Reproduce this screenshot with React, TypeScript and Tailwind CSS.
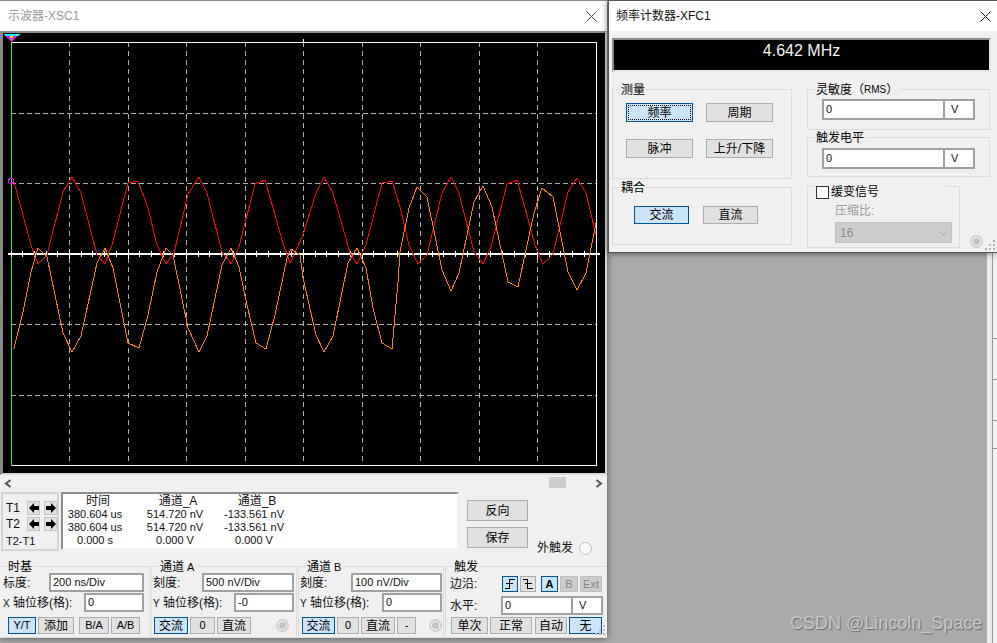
import type { ReactNode } from 'react';

const red = '14,182 23,215 31,245 38,264 47,255 63,192 72,177 81,193 97,255 105,264 112,245 128,183 138,181 148,208 157,245 166,264 174,253 188,194 199,177 207,193 222,252 231,264 239,247 255,184 265,180 275,215 283,243 290,263 303,235 316,193 324,177 333,193 350,253 357,264 366,245 382,183 392,181 400,207 409,245 418,264 427,255 442,193 451,177 459,193 474,252 483,264 491,247 507,184 517,180 527,215 535,245 543,264 553,254 568,192 577,178 586,193 596,235';
const orange = '13,349 14,348 23,312 31,272 38,248 47,257 55,295 63,333 72,352 81,336 97,263 105,248 113,268 128,343 139,348 148,315 157,272 166,248 173,255 188,328 199,352 207,336 222,265 231,248 239,267 247,305 256,343 266,349 275,315 287,258 291,249 300,255 303,278 316,335 324,352 333,336 348,263 357,248 366,268 373,308 382,343 392,349 398,282 400,252 409,208 417,187 427,197 442,270 451,291 459,273 474,202 483,186 492,207 508,282 518,287 534,213 542,188 553,197 568,272 577,290 586,273 596,223';

const minorTicks = Array.from({ length: 50 }, (_, i) => 11 + i * 11.7);
const majorX = [69.5, 128, 186.5, 245, 303, 362, 420, 479, 537];
const gridY = [113, 183, 324, 395];

function ScopeScreen() {
  return (
    <svg width="602" height="440" viewBox="3 33 602 440" shapeRendering="crispEdges" className="block">
      {majorX.map((x) => (
        <line key={x} x1={x} x2={x} y1="42" y2="466" stroke="#b0b0b0" strokeDasharray="5 4" />
      ))}
      {gridY.map((y) => (
        <line key={y} x1="11" x2="596" y1={y} y2={y} stroke="#b0b0b0" strokeDasharray="5 3" />
      ))}
      <path d="M11.5 42.5H596.5V465.5H11.5" fill="none" stroke="#fff" />
      <line x1="303.5" x2="303.5" y1="39" y2="42" stroke="#fff" />
      <line x1="11.5" x2="11.5" y1="40" y2="466" stroke="#3fe03f" />
      <line x1="8" x2="600" y1="254" y2="254" stroke="#fff" strokeWidth="2" />
      {minorTicks.map((x) => (
        <line key={x} x1={x} x2={x} y1="251" y2="257" stroke="#fff" />
      ))}
      {majorX.map((x) => (
        <line key={x} x1={x} x2={x} y1="249" y2="259" stroke="#fff" />
      ))}
      <polyline points={red} fill="none" stroke="#ff0000" />
      <polyline points={orange} fill="none" stroke="#ff8000" />
      <circle cx="11" cy="181" r="2.5" fill="none" stroke="#ff00ff" />
      <polygon points="3,34 20,34 18,36 5,36" fill="#00ffff" />
      <polygon points="5,36 18,36 11.5,42" fill="#ff00ff" />
      <rect x="10" y="36" width="3" height="2" fill="#ffff00" />
      <rect x="10" y="39" width="3" height="1" fill="#3fe03f" />
    </svg>
  );
}

function Btn({ className, active, focus, disabled, latin, children }: { className: string; active?: boolean; focus?: boolean; disabled?: boolean; latin?: boolean; children: ReactNode }) {
  const look = active
    ? 'bg-[#cce4f7] border-[#005499] text-black'
    : disabled
      ? 'bg-[#cccccc] border-[#bfbfbf] text-[#838383]'
      : 'bg-[#e1e1e1] border-[#adadad] text-black';
  return (
    <div className={`relative flex items-center justify-center shrink-0 border leading-none ${latin ? 'text-[11px]' : 'text-[12px]'} ${look} ${className}`}>
      {focus && <div className="absolute inset-[1px] border border-dotted border-black" />}
      {children}
    </div>
  );
}

function Field({ className, children }: { className: string; children: ReactNode }) {
  return (
    <div className={`flex items-center shrink-0 bg-white border-2 border-[#a0a0a0] text-[11px] leading-none text-[#111] ${className}`}>
      {children}
    </div>
  );
}

function Group({ title, className, titleClass, children }: { title: ReactNode; className: string; titleClass?: string; children: ReactNode }) {
  return (
    <div className={`relative border border-[#dcdcdc] ${className}`}>
      <div className={`absolute left-[7px] flex items-center bg-[#f0f0f0] px-[1px] text-[12px] leading-[14px] text-black ${titleClass ?? '-top-[7px]'}`}>{title}</div>
      {children}
    </div>
  );
}

function Radio({ className }: { className: string }) {
  return (
    <div className={`flex items-center justify-center shrink-0 size-[13px] rounded-full border-2 border-[#d0d0d0] bg-[#f8f8f8] ${className}`}>
      <div className="size-[7px] rounded-full bg-[#c4c4c4]" />
    </div>
  );
}

function Grip() {
  return (
    <svg width="11" height="11" viewBox="0 0 11 11" className="absolute right-[1px] bottom-[1px]">
      <g fill="#b5b5b5">
        <rect x="8" y="0" width="2" height="2" />
        <rect x="4" y="4" width="2" height="2" />
        <rect x="8" y="4" width="2" height="2" />
        <rect x="0" y="8" width="2" height="2" />
        <rect x="4" y="8" width="2" height="2" />
        <rect x="8" y="8" width="2" height="2" />
      </g>
    </svg>
  );
}

function Arrow({ left }: { left?: boolean }) {
  return (
    <Btn className="w-[13px] h-[14px] border-[#c4c4c4]">
      <svg width="10" height="10" viewBox="0 0 10 10">
        <path d={left ? 'M0 5 5 0V3H10V7H5V10Z' : 'M10 5 5 0V3H0V7H5V10Z'} fill="#000" />
      </svg>
    </Btn>
  );
}

function Chevron({ left }: { left?: boolean }) {
  return (
    <svg width="8" height="9" viewBox="0 0 8 9">
      <path d={left ? 'M6.5 1 2 4.5 6.5 8' : 'M1.5 1 6 4.5 1.5 8'} fill="none" stroke="#555" strokeWidth="2" />
    </svg>
  );
}

function CursorReadout() {
  const rows = [
    ['380.604 us', '514.720 nV', '-133.561 nV'],
    ['380.604 us', '514.720 nV', '-133.561 nV'],
    ['0.000 s', '0.000 V', '0.000 V'],
  ];
  return (
    <div className="w-[398px] h-[58px] bg-white border-2 border-[#8c8c8c] border-r-[#f0f0f0] border-b-[#f0f0f0] pl-[1px] pt-[1px]">
      <div className="grid grid-cols-[62px_98px_60px] w-[220px] text-center text-[11px] leading-[13px] text-[#111]">
        <div className="pl-[6px] text-[12px]">时间</div>
        <div className="pl-[6px] text-[12px]">通道_A</div>
        <div className="pl-[6px] text-[12px]">通道_B</div>
        {rows.flat().map((v, i) => (
          <div key={i}>{v}</div>
        ))}
      </div>
    </div>
  );
}

function AxisLabel({ axis, className }: { axis: string; className: string }) {
  return (
    <span className={`whitespace-nowrap ${className}`}>
      <span className="text-[10px]">{axis}</span> 轴位移(格):
    </span>
  );
}

function ScopeWindow() {
  return (
    <div className="absolute left-0 top-0 flex flex-col w-[607px] h-[638px] bg-[#f0f0f0] border-t border-[#888] shadow-[0_0_7px_rgba(0,0,0,0.55)]">
      <div className="flex items-center justify-between h-[30px] bg-white pl-[8px] pr-[10px] text-[12px] text-[#999]">
        <span>示波器-XSC1</span>
        <svg width="11" height="11" viewBox="0 0 11 11">
          <path d="M0.5 0.5 10.5 10.5M10.5 0.5 0.5 10.5" stroke="#444" />
        </svg>
      </div>
      <div className="h-[444px] border-l-[3px] border-t-[2px] border-r-[2px] border-b-[2px] border-l-[#8a8a8a] border-t-[#8a8a8a] border-r-[#d8d8d8] border-b-[#d8d8d8] bg-black">
        <ScopeScreen />
      </div>
      <div className="relative flex items-center justify-between h-[17px] px-[4px]">
        <Chevron left />
        <div className="absolute left-[549px] top-[2px] w-[17px] h-[11px] bg-[#cdcdcd]" />
        <Chevron />
      </div>
      <div className="flex h-[60px] pl-[1px]">
        <div className="w-[58px] h-[59px] border-2 border-[#d4d4d4] pl-[3px] pt-[7px] text-[12px] leading-none text-[#111]">
          <div className="flex items-center h-[14px]">
            <span className="w-[21px]">T1</span>
            <Arrow left />
            <div className="w-[4px]" />
            <Arrow />
          </div>
          <div className="flex items-center h-[14px] mt-[2px]">
            <span className="w-[21px]">T2</span>
            <Arrow left />
            <div className="w-[4px]" />
            <Arrow />
          </div>
          <div className="mt-[5px] text-[11px]">T2-T1</div>
        </div>
        <div className="w-[2px]" />
        <CursorReadout />
        <div className="flex flex-col gap-[6px] ml-[8px] mt-[8px]">
          <Btn className="w-[61px] h-[21px]">反向</Btn>
          <Btn className="w-[61px] h-[21px]">保存</Btn>
        </div>
        <div className="flex items-center self-end ml-[9px] mb-[-5px] text-[12px] text-[#111]">
          <span>外触发</span>
          <div className="ml-[6px] size-[13px] rounded-full border border-[#bdbdbd] bg-[#f8f8f8]" />
        </div>
      </div>
      <div className="flex gap-[1px] mt-[14px] text-[12px] text-[#111]">
        <Group title="时基" className="w-[150px] h-[72px] pl-[3px] pt-[6px] border-l-0">
          <div className="flex items-center h-[19px]">
            <span className="w-[46px]">标度:</span>
            <Field className="w-[95px] h-[19px] pl-[2px]">200 ns/Div</Field>
          </div>
          <div className="flex items-center h-[19px] mt-[1px]">
            <AxisLabel axis="X" className="w-[81px]" />
            <Field className="w-[60px] h-[19px] pl-[2px]">0</Field>
          </div>
          <div className="flex mt-[5px] ml-[5px] gap-[2px]">
            <Btn active latin className="w-[28px] h-[17px]">Y/T</Btn>
            <Btn className="w-[36px] h-[17px]">添加</Btn>
            <div className="w-[1px]" />
            <Btn latin className="w-[30px] h-[17px]">B/A</Btn>
            <Btn latin className="w-[29px] h-[17px]">A/B</Btn>
          </div>
        </Group>
        <Group title={<>通道 <span className="ml-[3px] text-[11px]">A</span></>} className="w-[146px] h-[72px] pl-[1px] pt-[6px]">
          <div className="flex items-center h-[19px]">
            <span className="w-[49px]">刻度:</span>
            <Field className="w-[92px] h-[19px] pl-[2px]">500 nV/Div</Field>
          </div>
          <div className="flex items-center h-[19px] mt-[1px]">
            <AxisLabel axis="Y" className="w-[81px]" />
            <Field className="w-[60px] h-[19px] pl-[2px]">-0</Field>
          </div>
          <div className="flex items-center mt-[5px] ml-[1px] gap-[2px]">
            <Btn active className="w-[34px] h-[17px]">交流</Btn>
            <Btn latin className="w-[25px] h-[17px]">0</Btn>
            <Btn className="w-[34px] h-[17px]">直流</Btn>
            <Radio className="ml-[23px]" />
          </div>
        </Group>
        <Group title={<>通道 <span className="ml-[3px] text-[11px]">B</span></>} className="w-[146px] h-[72px] pl-[1px] pt-[6px]">
          <div className="flex items-center h-[19px]">
            <span className="w-[51px]">刻度:</span>
            <Field className="w-[91px] h-[19px] pl-[2px]">100 nV/Div</Field>
          </div>
          <div className="flex items-center h-[19px] mt-[1px]">
            <AxisLabel axis="Y" className="w-[82px]" />
            <Field className="w-[60px] h-[19px] pl-[2px]">0</Field>
          </div>
          <div className="flex items-center mt-[5px] ml-[2px] gap-[2px]">
            <Btn active className="w-[33px] h-[17px]">交流</Btn>
            <Btn latin className="w-[22px] h-[17px]">0</Btn>
            <Btn className="w-[34px] h-[17px]">直流</Btn>
            <Btn latin className="w-[19px] h-[17px]">-</Btn>
            <Radio className="ml-[11px]" />
          </div>
        </Group>
        <Group title="触发" className="relative w-[162px] h-[72px] pl-[4px] pt-[9px] border-r-0">
          <div className="flex items-center h-[16px]">
            <span className="w-[52px]">边沿:</span>
            <Btn active className="w-[16px] h-[16px]">
              <svg width="10" height="10" viewBox="0 0 10 10" shapeRendering="crispEdges">
                <path d="M0 9.5H4.5V0.5H10M1 4.5H8" fill="none" stroke="#000" />
              </svg>
            </Btn>
            <Btn className="w-[16px] h-[16px] ml-[2px]">
              <svg width="10" height="10" viewBox="0 0 10 10" shapeRendering="crispEdges">
                <path d="M0 0.5H4.5V9.5H10M2 4.5H9" fill="none" stroke="#000" />
              </svg>
            </Btn>
            <Btn active latin className="w-[17px] h-[16px] ml-[5px] font-bold">A</Btn>
            <Btn disabled latin className="w-[18px] h-[16px] ml-[2px]">B</Btn>
            <Btn disabled latin className="w-[22px] h-[16px] ml-[2px]">Ext</Btn>
          </div>
          <div className="flex items-center h-[19px] mt-[4px]">
            <span className="w-[51px]">水平:</span>
            <Field className="w-[72px] h-[19px] pl-[2px]">0</Field>
            <Field className="w-[30px] h-[19px] border-l-0 pl-[6px]">V</Field>
          </div>
          <div className="flex mt-[2px] ml-[1px] gap-[2px]">
            <Btn className="w-[37px] h-[17px]">单次</Btn>
            <Btn className="w-[42px] h-[17px]">正常</Btn>
            <Btn className="w-[32px] h-[17px] ml-[1px]">自动</Btn>
            <Btn active className="w-[33px] h-[17px]">无</Btn>
          </div>
          <Grip />
        </Group>
      </div>
    </div>
  );
}

function CounterWindow() {
  return (
    <div className="absolute left-[608px] top-0 w-[389px] h-[253px] bg-[#f0f0f0] border-t border-l border-b border-[#555] shadow-[0_0_7px_rgba(0,0,0,0.55)]">
      <div className="flex items-center justify-between h-[30px] bg-white pl-[7px] pr-[6px] text-[12px] text-[#111]">
        <span>频率计数器-XFC1</span>
        <svg width="11" height="11" viewBox="0 0 11 11">
          <path d="M0.5 0.5 10.5 10.5M10.5 0.5 0.5 10.5" stroke="#111" />
        </svg>
      </div>
      <div className="flex items-center justify-center h-[34px] ml-[3px] mt-[7px] w-[379px] pb-[8px] bg-black border-2 border-[#8a8a8a] border-r-[#e8e8e8] border-b-[#e8e8e8] text-[16px] text-[#f4f4f4]">
        4.642 MHz
      </div>
      <div className="flex gap-[15px] pl-[3px] pt-[17px] text-[12px] text-[#111]">
        <div className="flex flex-col gap-[8px] w-[180px]">
          <Group title="测量" className="h-[90px] pl-[13px] pt-[13px]">
            <div className="grid grid-cols-[67px_67px] gap-x-[13px] gap-y-[17px]">
              <Btn active focus className="h-[19px]">频率</Btn>
              <Btn className="h-[19px]">周期</Btn>
              <Btn className="h-[19px]">脉冲</Btn>
              <Btn className="h-[19px]">上升/下降</Btn>
            </div>
          </Group>
          <Group title="耦合" className="h-[58px] pl-[21px] pt-[18px]">
            <div className="flex gap-[14px]">
              <Btn active className="w-[55px] h-[18px]">交流</Btn>
              <Btn className="w-[55px] h-[18px]">直流</Btn>
            </div>
          </Group>
        </div>
        <div className="flex flex-col w-[183px]">
          <Group title={<>灵敏度（<span className="text-[10px]">RMS</span>）</>} className="h-[41px] pl-[14px] pt-[9px]">
            <div className="flex">
              <Field className="w-[123px] h-[21px] pl-[2px]">0</Field>
              <Field className="w-[30px] h-[21px] border-l-0 pl-[6px]">V</Field>
            </div>
          </Group>
          <Group title="触发电平" className="h-[40px] mt-[7px] pl-[14px] pt-[10px]">
            <div className="flex">
              <Field className="w-[123px] h-[21px] pl-[2px]">0</Field>
              <Field className="w-[30px] h-[21px] border-l-0 pl-[6px]">V</Field>
            </div>
          </Group>
          <Group
            title={
              <>
                <div className="size-[13px] mr-[2px] bg-white border border-[#333]" />
                缓变信号
              </>
            }
            titleClass="-top-[2px] w-[131px]"
            className="w-[153px] h-[62px] mt-[9px] pl-[27px] pt-[17px]"
          >
            <div className="leading-[14px] text-[#9a9a9a]">压缩比:</div>
            <div className="flex items-center justify-between w-[117px] h-[21px] mt-[4px] bg-[#cccccc] border border-[#c0c0c0] pl-[4px] pr-[3px] text-[#8a8a8a]">
              <span>16</span>
              <svg width="10" height="6" viewBox="0 0 10 6">
                <path d="M1 1 5 5 9 1" fill="none" stroke="#a8a8a8" />
              </svg>
            </div>
          </Group>
        </div>
      </div>
      <Radio className="absolute right-[14px] bottom-[4px]" />
      <Grip />
    </div>
  );
}

export default function App() {
  return (
    <div className="relative flex w-[997px] h-[643px] overflow-hidden bg-[#aaaaaa] font-['Liberation_Sans','Noto_Sans_CJK_SC',sans-serif]">
      <div className="flex-1" />
      <div className="w-[5px] bg-[#ededed]" />
      <div className="w-[1px] bg-[#9a9a9a]" />
      <div className="w-[4px] bg-[#f0f0f0] pt-[338px]">
        <div className="h-[1px] bg-[#999]" />
        <div className="h-[1px] bg-[#999] mt-[40px]" />
        <div className="h-[1px] bg-[#999] mt-[40px]" />
        <div className="h-[1px] bg-[#999] mt-[27px]" />
      </div>
      <ScopeWindow />
      <CounterWindow />
      <div className="absolute left-[790px] top-[612px] text-[18px] leading-[22px] text-[#c8c8c8] [text-shadow:1px_1px_1px_#666]">
        CSDN @Lincoln_Space
      </div>
    </div>
  );
}
